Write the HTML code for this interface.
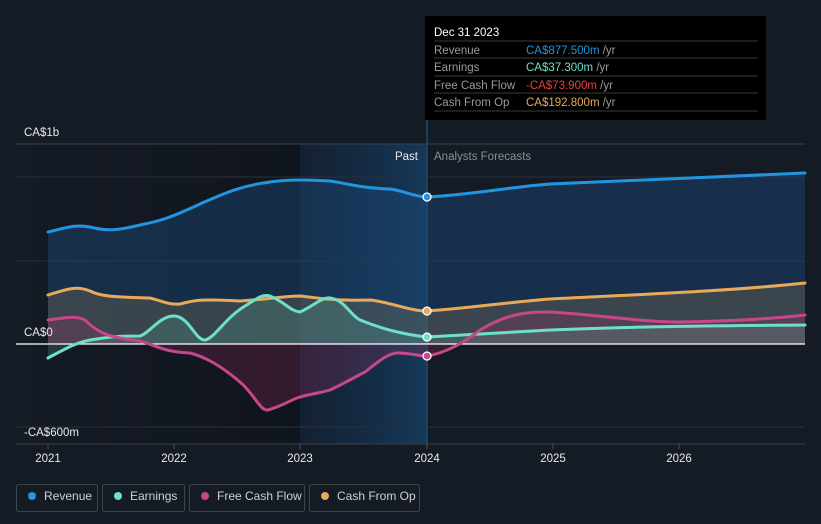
<!DOCTYPE html><html><head><style>
body{margin:0;background:#151b25;font-family:"Liberation Sans",sans-serif;}
svg{display:block}
</style></head><body>
<svg width="821" height="524" viewBox="0 0 821 524" font-family="Liberation Sans, sans-serif">
<defs>
<linearGradient id="past" x1="0" x2="1"><stop offset="0" stop-color="#151b25"/><stop offset="1" stop-color="#10151d"/></linearGradient>
<linearGradient id="hl" x1="0" x2="1"><stop offset="0" stop-color="#13243a" stop-opacity=".6"/><stop offset="1" stop-color="#164066" stop-opacity=".8"/></linearGradient>
</defs>
<rect width="821" height="524" fill="#151b25"/>
<rect x="16" y="144" width="284" height="300" fill="url(#past)"/>
<rect x="300" y="144" width="127" height="300" fill="url(#hl)"/>
<g stroke="#2a3039" stroke-width="1">
<line x1="16" y1="144" x2="805" y2="144" stroke="#3a4049"/>
<line x1="16" y1="177" x2="805" y2="177"/>
<line x1="16" y1="261" x2="805" y2="261"/>
<line x1="16" y1="427" x2="805" y2="427"/>
<line x1="16" y1="444" x2="805" y2="444" stroke="#3a4049"/>
</g>
<line x1="427" y1="120" x2="427" y2="444" stroke="#1f4a72" stroke-width="1.5"/>
<path d="M48,232 C65,228 75,224 90,227 C105,231 115,231 140,225 C160,221 170,218 200,204 C225,193 240,186 270,182 C290,179 310,180 330,181 C350,184 360,188 390,189 C405,191 415,197 427,197 C470,195 510,187 550,184 C650,179 730,176 805,173 L805,344 L48,344Z" fill="#1b4a78" fill-opacity=".45"/>
<path d="M48,295 C65,290 75,285 90,291 C100,296 110,297 150,298 C165,302 170,305 180,304 C195,300 200,299 240,301 C270,299 285,296 300,296 C320,298 330,301 370,300 C390,302 410,311 427,311 C470,308 510,302 550,299 C650,294 730,291 805,283 L805,344 L48,344Z" fill="#8a7a55" fill-opacity=".3"/>
<path d="M48,320 C65,318 75,315 85,320 C100,335 110,337 140,341 C160,347 165,352 190,353 C205,357 220,365 240,382 C255,395 260,411 268,410 C285,405 290,400 300,397 C315,393 320,393 330,390 C345,383 355,377 365,372 C380,360 390,352 400,353 C415,354 420,356 427,356 C450,352 470,338 480,330 C510,312 530,312 550,312 C600,315 640,322 680,322 C740,321 780,318 805,315 L805,344 L48,344Z" fill="#b0306a" fill-opacity=".22"/>
<path d="M48,358 C65,349 75,343 90,340 C105,338 110,336 140,336 C150,333 160,315 175,316 C190,318 195,340 205,340 C215,338 225,318 245,306 C258,298 262,294 270,296 C285,302 290,311 300,312 C315,305 322,297 330,298 C345,300 350,315 360,320 C380,328 400,334 427,337 L550,330 C620,327 680,326 805,325 L805,344 L48,344Z" fill="#60c0a8" fill-opacity=".2"/>
<line x1="16" y1="344" x2="805" y2="344" stroke="#fff" stroke-width="1.2"/>
<g fill="none" stroke-width="3" stroke-linecap="round">
<path d="M48,232 C65,228 75,224 90,227 C105,231 115,231 140,225 C160,221 170,218 200,204 C225,193 240,186 270,182 C290,179 310,180 330,181 C350,184 360,188 390,189 C405,191 415,197 427,197 C470,195 510,187 550,184 C650,179 730,176 805,173" stroke="#2394e0"/>
<path d="M48,295 C65,290 75,285 90,291 C100,296 110,297 150,298 C165,302 170,305 180,304 C195,300 200,299 240,301 C270,299 285,296 300,296 C320,298 330,301 370,300 C390,302 410,311 427,311 C470,308 510,302 550,299 C650,294 730,291 805,283" stroke="#e8a95a"/>
<path d="M48,358 C65,349 75,343 90,340 C105,338 110,336 140,336 C150,333 160,315 175,316 C190,318 195,340 205,340 C215,338 225,318 245,306 C258,298 262,294 270,296 C285,302 290,311 300,312 C315,305 322,297 330,298 C345,300 350,315 360,320 C380,328 400,334 427,337 L550,330 C620,327 680,326 805,325" stroke="#6ee0c8"/>
<path d="M48,320 C65,318 75,315 85,320 C100,335 110,337 140,341 C160,347 165,352 190,353 C205,357 220,365 240,382 C255,395 260,411 268,410 C285,405 290,400 300,397 C315,393 320,393 330,390 C345,383 355,377 365,372 C380,360 390,352 400,353 C415,354 420,356 427,356 C450,352 470,338 480,330 C510,312 530,312 550,312 C600,315 640,322 680,322 C740,321 780,318 805,315" stroke="#c7478a"/>
</g>
<g stroke="#fff" stroke-width="1.3">
<circle cx="427" cy="197" r="4" fill="#2394e0"/>
<circle cx="427" cy="311" r="4" fill="#e8a95a"/>
<circle cx="427" cy="337" r="4" fill="#6ee0c8"/>
<circle cx="427" cy="356" r="4" fill="#c7478a"/>
</g>
<g font-size="11.5" fill="#e8e8e8">
<text x="24" y="136">CA$1b</text>
<text x="24" y="336">CA$0</text>
<text x="24" y="436">-CA$600m</text>
<text x="418" y="160" text-anchor="end">Past</text>
<text x="434" y="160" fill="#8a8f96">Analysts Forecasts</text>
</g>
<g stroke="#4a5058"><line x1="48" y1="444" x2="48" y2="449"/><line x1="174" y1="444" x2="174" y2="449"/><line x1="300" y1="444" x2="300" y2="449"/><line x1="427" y1="444" x2="427" y2="449"/><line x1="553" y1="444" x2="553" y2="449"/><line x1="679" y1="444" x2="679" y2="449"/></g>
<g font-size="11.5" fill="#e8e8e8" text-anchor="middle">
<text x="48" y="462">2021</text><text x="174" y="462">2022</text><text x="300" y="462">2023</text><text x="427" y="462">2024</text><text x="553" y="462">2025</text><text x="679" y="462">2026</text>
</g>
<rect x="425" y="16" width="341" height="104" fill="#000"/>
<g stroke="#3a3a3a"><line x1="434" y1="41" x2="758" y2="41"/><line x1="434" y1="58" x2="758" y2="58"/><line x1="434" y1="76" x2="758" y2="76"/><line x1="434" y1="93" x2="758" y2="93"/><line x1="434" y1="111" x2="758" y2="111"/></g>
<g font-size="11.5">
<text x="434" y="36" fill="#fff">Dec 31 2023</text>
<text x="434" y="54" fill="#9a9a9a">Revenue</text>
<text x="434" y="71" fill="#9a9a9a">Earnings</text>
<text x="434" y="89" fill="#9a9a9a">Free Cash Flow</text>
<text x="434" y="106" fill="#9a9a9a">Cash From Op</text>
<text x="526" y="54" fill="#2394e0">CA$877.500m <tspan fill="#9a9a9a">/yr</tspan></text>
<text x="526" y="71" fill="#6ee0c8">CA$37.300m <tspan fill="#9a9a9a">/yr</tspan></text>
<text x="526" y="89" fill="#e84040">-CA$73.900m <tspan fill="#9a9a9a">/yr</tspan></text>
<text x="526" y="106" fill="#e8a95a">CA$192.800m <tspan fill="#9a9a9a">/yr</tspan></text>
</g>
<g fill="none" stroke="#3e444c"><rect x="16.5" y="484.5" width="81" height="27" rx="2"/><rect x="102.5" y="484.5" width="82" height="27" rx="2"/><rect x="189.5" y="484.5" width="115" height="27" rx="2"/><rect x="309.5" y="484.5" width="110" height="27" rx="2"/></g>
<circle cx="32" cy="496" r="4" fill="#2394e0"/><circle cx="118" cy="496" r="4" fill="#6ee0c8"/><circle cx="205" cy="496" r="4" fill="#c7478a"/><circle cx="325" cy="496" r="4" fill="#e8a95a"/>
<g font-size="12" fill="#d0d0d0"><text x="44" y="500">Revenue</text><text x="130" y="500">Earnings</text><text x="217" y="500">Free Cash Flow</text><text x="337" y="500">Cash From Op</text></g>
</svg>
</body></html>
